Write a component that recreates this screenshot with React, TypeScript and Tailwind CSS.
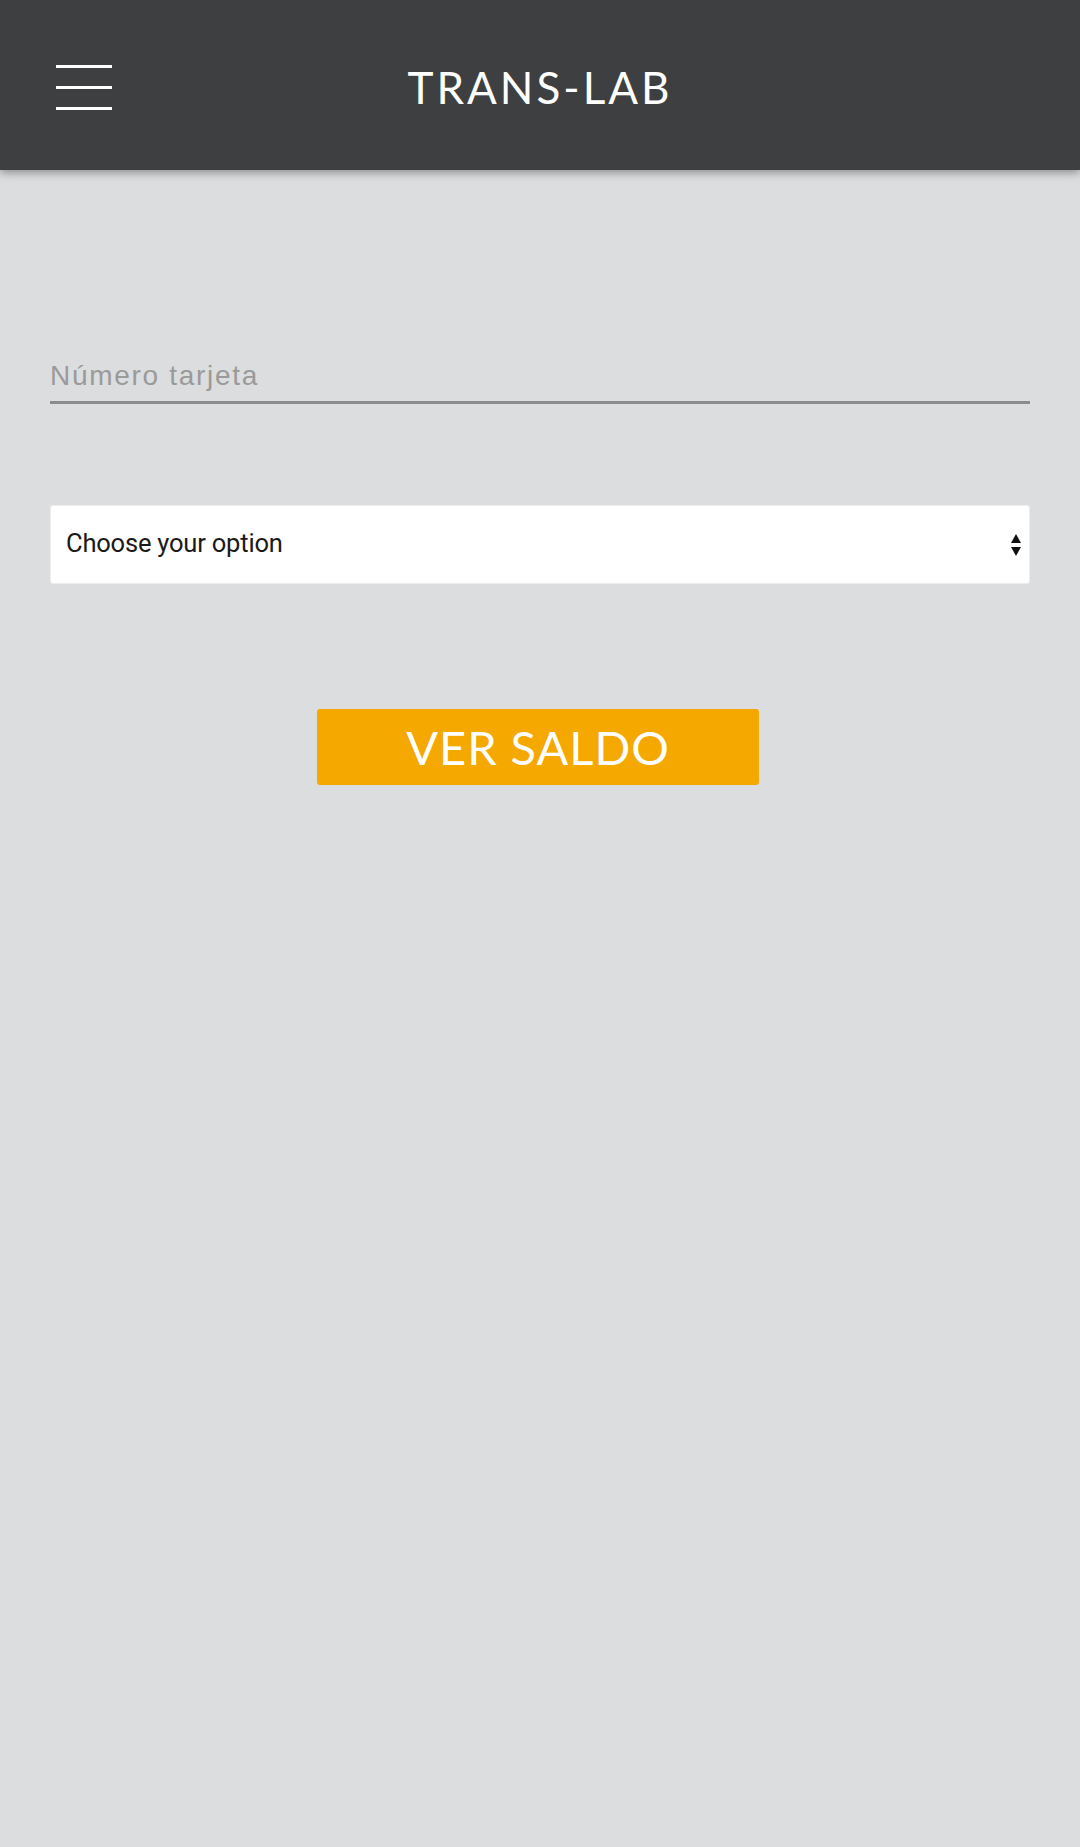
import { useState } from 'react';

export default function App() {
  const [card, setCard] = useState('');
  const [option, setOption] = useState('');

  return (
    <div className="min-h-[1847px] bg-[#dcdddf]">
      <header className="relative z-10 flex h-[170px] items-center bg-[#3e3f41] shadow-[0_3px_8px_rgba(0,0,0,0.35)]">
        <button aria-label="Menú" className="ml-[56px] mt-[4px] flex w-[56px] flex-col gap-[18px]">
          <span className="block h-[3px] w-full bg-white" />
          <span className="block h-[3px] w-full bg-white" />
          <span className="block h-[3px] w-full bg-white" />
        </button>
        <h1 className="absolute left-1/2 top-[61px] -translate-x-1/2 font-['Lato',sans-serif] text-[44px] font-normal leading-[52px] tracking-[3px] text-white">
          TRANS-LAB
        </h1>
      </header>

      <main className="px-[50px] pt-[188px]">
        <input
          type="text"
          value={card}
          onChange={(e) => setCard(e.target.value)}
          placeholder="Número tarjeta"
          className="block h-[46px] w-full border-b-[3px] border-[#8c8c8c] bg-transparent pb-[7px] font-['Liberation_Sans',Arial,sans-serif] text-[28px] leading-[36px] tracking-[1.7px] text-[#333] outline-none placeholder:text-[#9a9a9a]"
        />

        <div className="relative mt-[101px]">
          <select
            value={option}
            onChange={(e) => setOption(e.target.value)}
            className="block h-[79px] w-full appearance-none rounded-[3px] border border-[#ececec] bg-white pl-[15px] pb-[2px] font-['Roboto',sans-serif] text-[25.5px] font-normal tracking-[-0.2px] text-[#1a1a1a] outline-none"
          >
            <option value="" disabled>
              Choose your option
            </option>
            <option value="1">Tarjeta 1</option>
            <option value="2">Tarjeta 2</option>
          </select>
          <svg
            className="pointer-events-none absolute right-[8px] top-1/2 -translate-y-1/2"
            width="12"
            height="24"
            viewBox="0 0 12 24"
          >
            <path d="M6 1 L11 10 L1 10 Z" fill="#111" />
            <path d="M1 14 L11 14 L6 23 Z" fill="#111" />
          </svg>
        </div>

        <div className="mt-[125px] flex justify-center pr-[4px]">
          <button className="h-[76px] w-[442px] rounded-[3px] bg-[#f5a800] font-['Lato',sans-serif] text-[47px] font-normal tracking-[1px] text-white">
            VER SALDO
          </button>
        </div>
      </main>
    </div>
  );
}
